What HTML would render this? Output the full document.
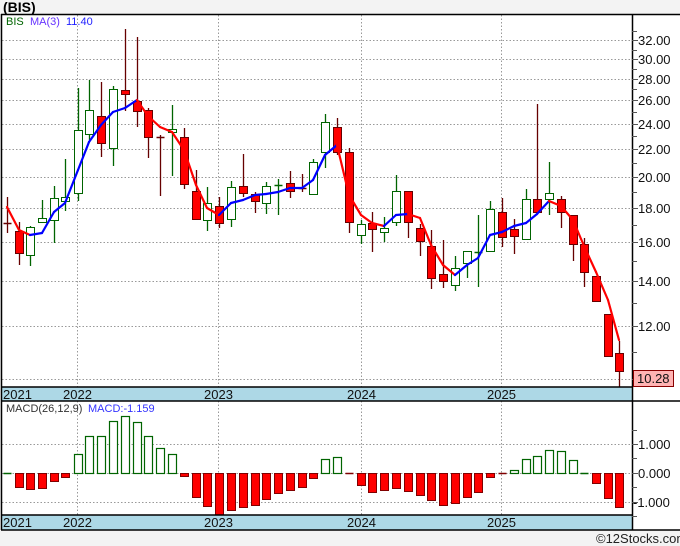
<!DOCTYPE html>
<html><head><meta charset="utf-8"><style>
html,body{margin:0;padding:0;background:#f3f3f3;width:680px;height:546px;overflow:hidden;font-family:"Liberation Sans","DejaVu Sans",sans-serif}
svg{position:absolute;left:0;top:0}
</style></head><body>
<svg id="s" width="680" height="546" xmlns="http://www.w3.org/2000/svg" font-family="Liberation Sans, DejaVu Sans, sans-serif">
<rect x="2" y="14" width="678" height="516" fill="#fff"/>
<g id="grid" stroke="#999" stroke-dasharray="1.5,2" stroke-width="1"></g>
<g id="c"></g>
<rect x="2" y="387" width="630" height="14" fill="#add8e6"/>
<rect x="2" y="515" width="630" height="15" fill="#add8e6"/>
<g stroke="#000" stroke-width="1.5">
<line x1="1" y1="14.5" x2="680" y2="14.5"/>
<line x1="1.5" y1="14" x2="1.5" y2="530"/>
<line x1="632.5" y1="14" x2="632.5" y2="530"/>
<line x1="1" y1="387" x2="632" y2="387"/>
<line x1="1" y1="401" x2="680" y2="401"/>
<line x1="1" y1="515" x2="632" y2="515"/>
<line x1="1" y1="530" x2="680" y2="530"/>
</g>
<g id="ticks" stroke="#555" stroke-width="1"></g>
<text x="3" y="12" font-size="14" font-weight="bold" fill="#000">(BIS)</text>
<text x="6" y="25" font-size="11" fill="#006400">BIS</text>
<text x="30" y="25" font-size="11" fill="#6633ff">MA(3)</text>
<text x="66" y="25" font-size="11" fill="#2222ff">11.40</text>
<text x="6" y="412" font-size="11" fill="#333">MACD(26,12,9)</text>
<text x="88" y="412" font-size="11" fill="#3333ff">MACD:-1.159</text>
<g font-size="13" fill="#111">
<text x="638" y="45">32.00</text><text x="638" y="64">30.00</text><text x="638" y="84">28.00</text>
<text x="638" y="105">26.00</text><text x="638" y="129">24.00</text><text x="638" y="154">22.00</text>
<text x="638" y="182">20.00</text><text x="638" y="213">18.00</text><text x="638" y="247">16.00</text>
<text x="638" y="286">14.00</text><text x="638" y="331">12.00</text>
<text x="638" y="449">1.000</text><text x="638" y="478">0.000</text><text x="633" y="507">-1.000</text>
</g>
<rect x="633.5" y="370.5" width="40" height="16" fill="#ffb3b3" stroke="#800" stroke-width="1"/>
<text x="637" y="383" font-size="13" fill="#111">10.28</text>
<g font-size="13" fill="#111">
<text x="3" y="399">2021</text><text x="63" y="399">2022</text><text x="204" y="399">2023</text><text x="347" y="399">2024</text><text x="487" y="399">2025</text>
<text x="3" y="527">2021</text><text x="63" y="527">2022</text><text x="204" y="527">2023</text><text x="347" y="527">2024</text><text x="487" y="527">2025</text>
</g>
<text x="596" y="543" font-size="13" fill="#222">©12Stocks.com</text>
</svg>
<script>
var NS="http://www.w3.org/2000/svg";
function el(p,t,a){var e=document.createElementNS(NS,t);for(var k in a)e.setAttribute(k,a[k]);document.getElementById(p).appendChild(e);return e;}
[40,59,79,100,124,149,177,208,242,281,326,379,444,473,502].forEach(function(y){el("grid","line",{x1:2,x2:632,y1:y+.5,y2:y+.5});el("ticks","line",{x1:632,x2:638,y1:y+.5,y2:y+.5});});
[31,50,69,89,112,136,163,192,225,261,303,352,430,458,487,516].forEach(function(y){el("ticks","line",{x1:632,x2:637,y1:y+.5,y2:y+.5});});
[77,218,361,501].forEach(function(x){el("grid","line",{x1:x+.5,x2:x+.5,y1:15,y2:387});el("grid","line",{x1:x+.5,x2:x+.5,y1:401,y2:515});});
var C=[[7,223,223,197,233,'r'],[19,231,253,222,265,'r'],[30,227,255,226,266,'g'],[42,218,222,200,223,'g'],[54,198,220,186,243,'g'],[65,197,201,159,211,'g'],[78,130,193,88,201,'g'],[89,110,134,80,140,'g'],[101,116,143,82,157,'r'],[113,89,148,86,166,'g'],[125,90,94,29,111,'r'],[137,101,111,37,127,'r'],[148,110,137,108,158,'r'],[160,137,137,135,196,'r'],[172,129,132,105,176,'g'],[184,137,184,128,189,'r'],[196,191,219,170,219,'r'],[207,203,220,187,231,'g'],[219,206,223,197,228,'r'],[231,187,219,181,227,'g'],[243,186,193,154,197,'r'],[255,194,201,192,213,'r'],[266,186,203,182,214,'g'],[278,185,187,179,215,'g'],[290,183,191,171,198,'r'],[302,188,188,174,192,'r'],[313,162,194,159,194,'g'],[325,122,152,114,168,'g'],[337,127,152,118,155,'r'],[349,152,222,148,233,'r'],[361,224,235,220,244,'g'],[372,223,229,212,252,'r'],[384,228,232,217,242,'g'],[396,191,222,175,226,'g'],[408,191,222,191,238,'r'],[420,228,241,224,256,'r'],[431,246,278,230,289,'r'],[443,274,281,240,288,'r'],[455,268,285,256,291,'g'],[467,251,263,251,278,'g'],[478,252,254,215,287,'g'],[490,209,251,201,252,'g'],[502,212,237,198,247,'r'],[514,229,236,219,254,'r'],[526,199,239,189,240,'g'],[537,199,212,104,212,'r'],[549,193,199,162,215,'g'],[561,199,212,196,228,'r'],[573,215,244,215,261,'r'],[584,244,272,238,287,'r'],[596,276,301,276,301,'r'],[608,314,356,314,356,'r'],[619,353,371,341,387,'r']];
C.forEach(function(d){var g=d[5]=='g';var wc=g?'#006400':'#660000';
el("c","line",{x1:d[0]+.5,x2:d[0]+.5,y1:d[3],y2:d[4],stroke:wc,"stroke-width":1.3});
var h=Math.max(d[2]-d[1],1);
if(h<=2){el("c","line",{x1:d[0]-3.5,x2:d[0]+4.5,y1:d[1]+.5,y2:d[1]+.5,stroke:wc,"stroke-width":1.5});}
else el("c","rect",{x:d[0]-3.5,y:d[1]+.5,width:8,height:h,fill:g?'#fff':'#ff0000',stroke:g?'#006400':'#660000',"stroke-width":1});});
var M=[207,230,235,233,212,203,170,142,125,112,108,100,116,127,132,150,185,208,215,203,200,195,194,192,188,188,180,155,145,195,215,223,226,215,214,218,245,265,275,265,258,235,232,226,223,214,201,206,220,246,272,300,340];
for(var i=1;i<M.length;i++){el("c","line",{x1:C[i-1][0],x2:C[i][0],y1:M[i-1],y2:M[i],stroke:M[i]<=M[i-1]?'#0000ff':'#ff0000',"stroke-width":2.2,"stroke-linecap":"round"});}
var B=[472,487,489,488,481,477,454,436,436,421,416,422,436,448,454,476,497,506,515,510,507,505,499,493,490,487,478,459,457,475,485,492,490,488,491,495,500,505,503,497,492,477,474,470,459,456,450,451,460,471,483,498,507];
B.forEach(function(v,i){var x=C[i][0];if(Math.abs(v-473)<=2){el("c","line",{x1:x-3.5,x2:x+4.5,y1:473.5,y2:473.5,stroke:v<473?'#006400':'#800000',"stroke-width":1.5});return;}
if(v<473)el("c","rect",{x:x-3.5,y:v+.5,width:8,height:473-v,fill:'#fff',stroke:'#006400',"stroke-width":1.2});
else el("c","rect",{x:x-3.5,y:473.5,width:8,height:v-473,fill:'#ff0000',stroke:'#800000',"stroke-width":1});});
</script>
</body></html>
